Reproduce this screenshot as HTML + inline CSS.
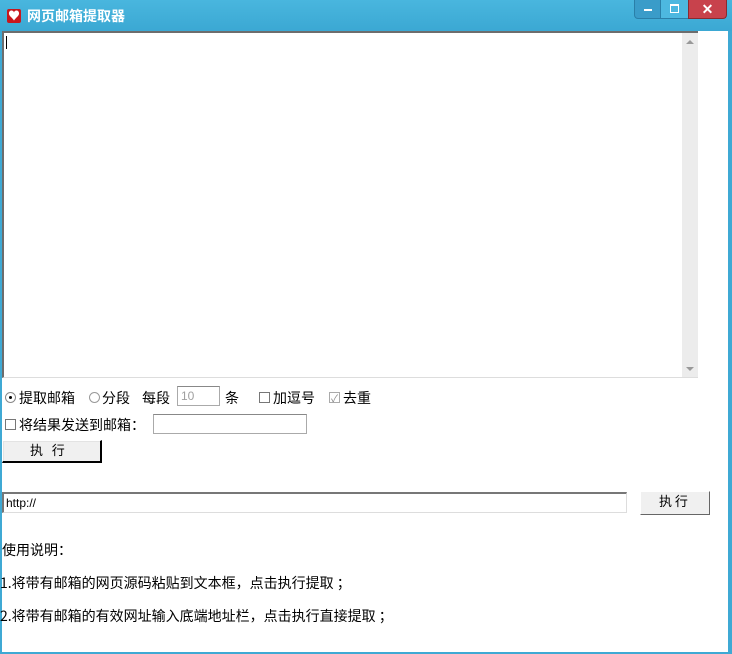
<!DOCTYPE html><html><head><meta charset="utf-8"><style>
*{margin:0;padding:0;box-sizing:border-box}
body{width:732px;height:654px;background:#3fa9d4;position:relative;overflow:hidden;font-family:"SimSun","Noto Sans CJK SC","WenQuanYi Zen Hei",sans-serif;font-size:14px;color:#000}
.a{position:absolute}
#client{left:2px;top:31px;width:726px;height:621px;background:#fff}
.t{white-space:nowrap;line-height:16px}
.cb{width:11px;height:11px;border:1px solid #777;background:#fff}
</style></head><body>
<div class="a" style="left:0;top:0;width:732px;height:31px;background:linear-gradient(#49b6de,#3ba8d3)"></div>
<div class="a" style="left:7px;top:9px;width:14px;height:14px;background:#c8161c;border-radius:2px;color:#fff;font-size:12px;line-height:14px;text-align:center">♥</div>
<div class="a t" style="left:27px;top:8px;color:#fff;font-weight:bold;font-size:14px">网页邮箱提取器</div>
<div class="a" style="left:634px;top:0;width:27px;height:19px;background:#3a9cc9;border:1px solid #2a7fa8;border-top:none;border-radius:0 0 0 4px"></div>
<div class="a" style="left:644px;top:9px;width:8px;height:2px;background:#fff"></div>
<div class="a" style="left:661px;top:0;width:27px;height:19px;background:#4db8e0;border-bottom:1px solid #2a7fa8"></div>
<div class="a" style="left:670px;top:4px;width:9px;height:9px;border:1px solid #fff;border-top-width:2px"></div>
<div class="a" style="left:688px;top:0;width:39px;height:19px;background:#c8424c;border:1px solid #8a2a30;border-top:none;border-radius:0 0 4px 0;color:#fff;font-weight:bold;font-size:14px;text-align:center;line-height:18px;font-family:'Liberation Sans',sans-serif">✕</div>
<div id="client" class="a"></div>
<div class="a" style="left:2px;top:31px;width:696px;height:347px;border-top:2px solid #6d6d6d;border-left:2px solid #6d6d6d;border-bottom:1px solid #ddd;background:#fff"></div>
<div class="a" style="left:6px;top:36px;width:1px;height:13px;background:#000"></div>
<div class="a" style="left:682px;top:33px;width:16px;height:344px;background:#ececec"></div>
<div class="a" style="left:686px;top:40px;width:0;height:0;border-left:4px solid transparent;border-right:4px solid transparent;border-bottom:4px solid #999"></div>
<div class="a" style="left:686px;top:367px;width:0;height:0;border-left:4px solid transparent;border-right:4px solid transparent;border-top:4px solid #999"></div>
<div class="a" style="left:5px;top:392px;width:11px;height:11px;border:1px solid #888;border-radius:50%;background:#fff"></div>
<div class="a" style="left:9px;top:396px;width:3px;height:3px;background:#000;border-radius:50%"></div>
<div class="a t" style="left:19px;top:390px">提取邮箱</div>
<div class="a" style="left:89px;top:392px;width:11px;height:11px;border:1px solid #999;border-radius:50%"></div>
<div class="a t" style="left:102px;top:390px">分段</div>
<div class="a t" style="left:142px;top:390px">每段</div>
<div class="a" style="left:177px;top:386px;width:43px;height:20px;border:1px solid #aaa;border-top-color:#888;color:#a0a0a0;font-family:'Liberation Sans',sans-serif;font-size:12px;padding:2px 3px">10</div>
<div class="a t" style="left:225px;top:390px">条</div>
<div class="a cb" style="left:259px;top:392px"></div>
<div class="a t" style="left:273px;top:390px">加逗号</div>
<div class="a cb" style="left:329px;top:392px;border-color:#aaa;color:#888;font-size:10px;line-height:9px;text-align:center">✓</div>
<div class="a t" style="left:343px;top:390px">去重</div>
<div class="a cb" style="left:5px;top:419px"></div>
<div class="a t" style="left:19px;top:417px">将结果发送到邮箱：</div>
<div class="a" style="left:153px;top:414px;width:154px;height:20px;border:1px solid #aaa;border-top-color:#888"></div>
<div class="a" style="left:2px;top:440px;width:100px;height:23px;background:#f0f0f0;border:1px solid #fff;border-right:2px solid #000;border-bottom:2px solid #000;box-shadow:inset 1px 1px #e3e3e3"></div>
<div class="a t" style="left:30px;top:442px;font-size:13px">执&nbsp;&nbsp;&nbsp;行</div>
<div class="a" style="left:2px;top:492px;width:625px;height:21px;border:1px solid #ddd;border-top:2px solid #777;border-left:2px solid #777;font-family:'Liberation Sans',sans-serif;font-size:12px;padding:1px 2px;line-height:16px">http://</div>
<div class="a" style="left:640px;top:491px;width:70px;height:24px;background:#f0f0f0;border:1px solid #fff;border-right:1px solid #666;border-bottom:1px solid #666"></div>
<div class="a t" style="left:659px;top:493px;font-size:13px">执&nbsp;行</div>
<div class="a t" style="left:2px;top:542px">使用说明：</div>
<div class="a t" style="left:0px;top:575px">1.将带有邮箱的网页源码粘贴到文本框，点击执行提取 ；</div>
<div class="a t" style="left:0px;top:608px">2.将带有邮箱的有效网址输入底端地址栏，点击执行直接提取 ；</div>
</body></html>
